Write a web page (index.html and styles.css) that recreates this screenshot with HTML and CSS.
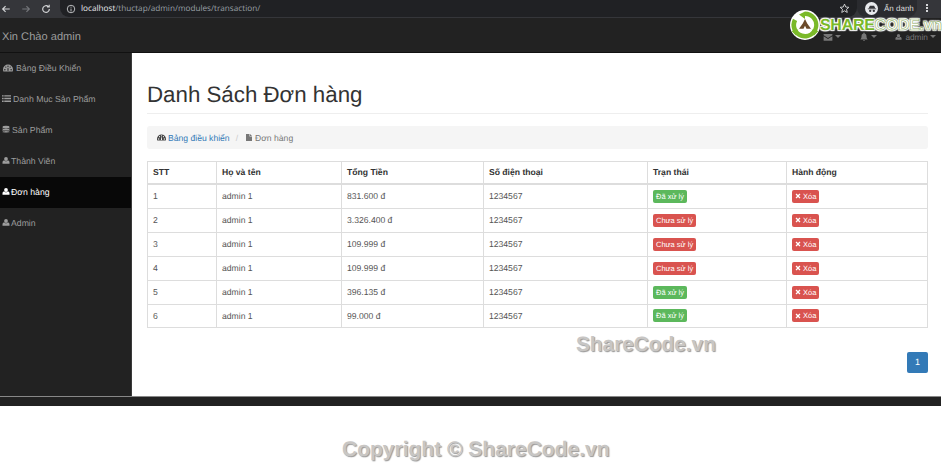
FILE: index.html
```html
<!DOCTYPE html>
<html>
  <head>
    <meta charset="UTF-8" />
    <title>Danh Sách Đơn hàng</title>
    <link rel="stylesheet" href="styles.css">
  </head>
  <body>
    <svg class="icon-defs" width="0" height="0">
      <symbol id="i-gauge" viewBox="0 0 16 16"><path fill-rule="evenodd" d="M8 2.500a8 8 0 0 0-8 8c0 1.200.2 2 .6 3h14.800c.4-1 .6-1.800.6-3a8 8 0 0 0-8-8zM3 11.800a1.200 1.200 0 1 1 0-2.400 1.200 1.200 0 0 1 0 2.400zM4.500 7.600a1.100 1.100 0 1 1 0-2.200 1.100 1.100 0 0 1 0 2.200zM8 6.200a1.100 1.100 0 1 1 0-2.200 1.100 1.100 0 0 1 0 2.200zM11.500 7.600a1.100 1.100 0 1 1 0-2.200 1.100 1.100 0 0 1 0 2.200zM13 11.800a1.200 1.200 0 1 1 0-2.400 1.200 1.200 0 0 1 0 2.400zM7 12.500l.4-5h1.200l.4 5z"/></symbol>
      <symbol id="i-list" viewBox="0 0 16 16"><path d="M0 2h3v2.500H0zm4 0h12v2.500H4zM0 6.700h3v2.500H0zm4 0h12v2.500H4zM0 11.500h3V14H0zm4 0h12V14H4z"/></symbol>
      <symbol id="i-db" viewBox="0 0 16 16"><ellipse cx="8" cy="3.500" rx="7" ry="2.800"/><path d="M1 5.500C3 7.800 13 7.800 15 5.500v2.300c-2 2.300-12 2.300-14 0zm0 3.400c2 2.300 12 2.300 14 0v2.300c-2 2.300-12 2.300-14 0zM1 12.300c2 2.300 12 2.300 14 0V13c-1.500 2.800-12.500 2.800-14 0z"/></symbol>
      <symbol id="i-user" viewBox="0 0 16 16"><circle cx="8" cy="5" r="3.800"/><path d="M1 14.500v-3c0-2 1.500-3.300 3.600-3.300C5.500 9.200 6.700 9.800 8 9.800s2.500-.6 3.400-1.600c2.100 0 3.600 1.300 3.600 3.300v3z"/></symbol>
      <symbol id="i-file" viewBox="0 0 16 16"><path d="M2 1h7v5h5v9H2zM10 1l4 4h-4z"/></symbol>
      <symbol id="i-x" viewBox="0 0 16 16"><path d="M4 1.500l4 4 4-4 2.500 2.500-4 4 4 4-2.500 2.500-4-4-4 4L1.500 12l4-4-4-4z"/></symbol>
      <symbol id="i-mail" viewBox="0 0 16 16"><path d="M1 3h14v2L8 9.500 1 5zm0 3.700L8 11l7-4.300V14H1z"/></symbol>
      <symbol id="i-bell" viewBox="0 0 16 16"><path d="M8 1a1 1 0 0 1 1 1.200c2.300.5 3 2.300 3 4.800 0 2.500 1 3.800 2 5H2c1-1.200 2-2.500 2-5 0-2.500.7-4.300 3-4.800A1 1 0 0 1 8 1zM6.500 13h3a1.500 1.500 0 0 1-3 0z"/></symbol>
    </svg>

    <div class="browser-bar">
      <div class="browser-nav">
        <svg class="nav-btn" viewBox="0 0 12 12"><path d="M10.500 6H2M5.500 2.500L2 6l3.500 3.500"/></svg>
        <svg class="nav-btn nav-off" viewBox="0 0 12 12"><path d="M1.500 6H10M6.500 2.500L10 6 6.500 9.500"/></svg>
        <svg class="nav-btn" viewBox="0 0 12 12"><path d="M10 6a4 4 0 1 1-1.200-2.800M9.800 1v2.600H7.200"/></svg>
      </div>
      <div class="address">
        <svg class="info" viewBox="0 0 12 12"><circle cx="6" cy="6" r="4.500"/><path d="M6 5.500V9M6 3.200v1.200"/></svg>
        <span class="url"><b>localhost</b>/thuctap/admin/modules/transaction/</span>
        <svg class="star" viewBox="0 0 12 12"><path d="M6 1.200l1.400 3.200 3.400.3-2.600 2.200.8 3.400L6 8.500l-3 1.800.8-3.400-2.600-2.200 3.400-.3z"/></svg>
      </div>
      <div class="incognito">
        <span class="spy"><svg viewBox="0 0 12 12"><path d="M2 5h8L8.500 2h-5zM1 5.500h10v.8H1z"/><circle cx="3.800" cy="8.200" r="1.400"/><circle cx="8.200" cy="8.200" r="1.400"/></svg></span>
        <span>Ẩn danh</span>
      </div>
      <div class="kebab"><i></i><i></i><i></i></div>
    </div>

    <div class="page">
      <header class="navbar">
        <a class="brand">Xin Chào admin</a>
        <div class="nav-tools">
          <span class="tool"><svg class="ico"><use href="#i-mail"/></svg><i class="caret"></i></span>
          <span class="tool"><svg class="ico"><use href="#i-bell"/></svg><i class="caret"></i></span>
          <span class="tool"><svg class="ico"><use href="#i-user"/></svg>admin<i class="caret"></i></span>
        </div>
      </header>

      <div class="wrapper">
        <nav class="sidebar">
          <a class="side-link side-gauge"><svg class="ico"><use href="#i-gauge"/></svg>Bảng Điều Khiển</a>
          <a class="side-link"><svg class="ico"><use href="#i-list"/></svg>Danh Mục Sản Phẩm</a>
          <a class="side-link side-db"><svg class="ico"><use href="#i-db"/></svg>Sản Phẩm</a>
          <a class="side-link side-user"><svg class="ico"><use href="#i-user"/></svg>Thành Viên</a>
          <a class="side-link side-user active"><svg class="ico"><use href="#i-user"/></svg>Đơn hàng</a>
          <a class="side-link side-user"><svg class="ico"><use href="#i-user"/></svg>Admin</a>
        </nav>

        <main class="content">
          <h1 class="page-title">Danh Sách Đơn hàng</h1>
          <div class="breadcrumb">
            <svg class="ico crumb-home"><use href="#i-gauge"/></svg><a>Bảng điều khiển</a>
            <span class="sep">/</span>
            <svg class="ico crumb-file"><use href="#i-file"/></svg><span>Đơn hàng</span>
          </div>

          <table class="orders">
            <thead>
              <tr>
                <th class="c-stt">STT</th>
                <th class="c-name">Họ và tên</th>
                <th class="c-total">Tổng Tiền</th>
                <th class="c-phone">Số điện thoại</th>
                <th class="c-state">Trạn thái</th>
                <th>Hành động</th>
              </tr>
            </thead>
            <tbody>
              <tr>
                <td>1</td><td>admin 1</td><td>831.600 đ</td><td>1234567</td>
                <td><span class="btn green">Đã xử lý</span></td>
                <td><span class="btn red"><svg class="ico"><use href="#i-x"/></svg>Xóa</span></td>
              </tr>
              <tr>
                <td>2</td><td>admin 1</td><td>3.326.400 đ</td><td>1234567</td>
                <td><span class="btn red">Chưa sử lý</span></td>
                <td><span class="btn red"><svg class="ico"><use href="#i-x"/></svg>Xóa</span></td>
              </tr>
              <tr>
                <td>3</td><td>admin 1</td><td>109.999 đ</td><td>1234567</td>
                <td><span class="btn red">Chưa sử lý</span></td>
                <td><span class="btn red"><svg class="ico"><use href="#i-x"/></svg>Xóa</span></td>
              </tr>
              <tr>
                <td>4</td><td>admin 1</td><td>109.999 đ</td><td>1234567</td>
                <td><span class="btn red">Chưa sử lý</span></td>
                <td><span class="btn red"><svg class="ico"><use href="#i-x"/></svg>Xóa</span></td>
              </tr>
              <tr>
                <td>5</td><td>admin 1</td><td>396.135 đ</td><td>1234567</td>
                <td><span class="btn green">Đã xử lý</span></td>
                <td><span class="btn red"><svg class="ico"><use href="#i-x"/></svg>Xóa</span></td>
              </tr>
              <tr>
                <td>6</td><td>admin 1</td><td>99.000 đ</td><td>1234567</td>
                <td><span class="btn green">Đã xử lý</span></td>
                <td><span class="btn red"><svg class="ico"><use href="#i-x"/></svg>Xóa</span></td>
              </tr>
            </tbody>
          </table>

          <div class="pager"><a class="page-num">1</a></div>
        </main>
      </div>
      <div class="bottom-bar"></div>
    </div>

    <!-- watermarks on top of the shot -->
    <div class="logo">
      <svg class="logo-mark" viewBox="0 0 40 40">
        <circle cx="20" cy="20" r="20" fill="#fff"/>
        <path d="M20 2a18 18 0 1 1-16 9.500l5.500 3a12 12 0 1 0 10.500-6.500z" fill="#7ab929"/>
        <path d="M20 2l-8 4 8 6zM2 28l9-2-3 8zM38 28l-9-2 3 8z" fill="#7ab929"/>
        <path d="M20 12l3 6 5 7h-6l-2-4-2 4h-6l5-7z" fill="#6b4a2a"/>
      </svg>
      <span class="logo-text"><b>SHARE</b><span class="logo-code">CODE.vn</span></span>
    </div>
    <div class="mark mark-mid">ShareCode.vn</div>
    <div class="mark mark-foot">Copyright © ShareCode.vn</div>
  </body>
</html>
```

FILE: styles.css
```css
/* screenshot of an admin page inside a browser */
body {
  margin: 0;
  width: 950px;
  height: 472px;
  overflow: hidden;
  background-color: #fff;
  font-family: "Liberation Sans", Arial, sans-serif;
  font-size: 9px;
  color: #444;
  text-rendering: geometricPrecision;
}
.icon-defs {
  display: block;
  height: 0;
}
.ico {
  width: 9px;
  height: 9px;
  fill: currentColor;
  flex: none;
}

/* browser chrome */
.browser-bar {
  display: flex;
  align-items: flex-start;
  width: 941px;
  height: 18px;
  background-color: #35363a;
  color: #ddd;
}
.browser-nav {
  display: flex;
  align-items: center;
  gap: 10px;
  height: 17px;
  padding-left: 1px;
  width: 60px;
  box-sizing: border-box;
}
.nav-btn {
  width: 10px;
  height: 10px;
  fill: none;
  stroke: #d5d6d8;
  stroke-width: 1.400;
}
.nav-off {
  stroke: #74767a;
}
.address {
  display: flex;
  align-items: center;
  width: 797px;
  height: 17px;
  padding-left: 6px;
  box-sizing: border-box;
  background-color: #202124;
  border-radius: 0 0 9px 9px;
  color: #9aa0a6;
}
.address b {
  font-weight: normal;
  color: #e8eaed;
}
.info {
  width: 10px;
  height: 10px;
  margin-right: 5px;
  fill: none;
  stroke: #d5d6d8;
}
.url {
  flex: 1;
  font-family: "Open Sans", sans-serif;
  font-size: 8.200px;
}
.star {
  width: 11px;
  height: 11px;
  margin-right: 7px;
  fill: none;
  stroke: #d5d6d8;
}
.incognito {
  display: flex;
  align-items: center;
  gap: 6px;
  height: 17px;
  width: 60px;
  padding-left: 8px;
  box-sizing: border-box;
  background-color: #2a2b2f;
  border-radius: 0 0 9px 9px;
  font-size: 8px;
  color: #dcdcdc;
}
.spy {
  display: flex;
  align-items: center;
  justify-content: center;
  width: 13px;
  height: 13px;
  border-radius: 50%;
  background-color: #e8eaed;
}
.spy svg {
  width: 10px;
  height: 10px;
  fill: #35363a;
}
.kebab {
  display: flex;
  flex-direction: column;
  gap: 1px;
  margin-left: 9px;
  padding-top: 4px;
}
.kebab i {
  width: 2px;
  height: 2px;
  background-color: #d5d6d8;
}

/* app */
.page {
  width: 941px;
  height: 388px;
  background-color: #222;
}
.navbar {
  display: flex;
  align-items: center;
  justify-content: space-between;
  height: 35px;
  padding-top: 3px;
  box-sizing: border-box;
  border-bottom: 1px solid #111;
  background-color: #222;
}
.brand {
  padding-left: 2px;
  font-size: 11.100px;
  color: #9d9d9d;
}
.nav-tools {
  display: flex;
  gap: 18px;
  padding-right: 5px;
  color: #777;
}
.tool {
  display: flex;
  align-items: center;
  gap: 1px;
  font-size: 8.300px;
}
.tool .ico {
  width: 10px;
  height: 10px;
}
.tool:last-child .ico {
  width: 7px;
  height: 8px;
  margin-right: 2px;
}
.caret {
  width: 0;
  height: 0;
  margin-left: 1px;
  border-top: 3px solid currentColor;
  border-left: 3px solid transparent;
  border-right: 3px solid transparent;
}
.wrapper {
  display: flex;
  height: 343px;
}
.sidebar {
  width: 132px;
  flex: none;
  border-right: 1px solid #3a3a3a;
  box-sizing: border-box;
  font-size: 8.700px;
}
.side-link {
  display: flex;
  align-items: center;
  gap: 2px;
  height: 31px;
  padding-left: 2px;
  padding-bottom: 2px;
  box-sizing: border-box;
  color: #9d9d9d;
}
.side-gauge {
  padding-left: 3px;
  gap: 3px;
}
.side-gauge .ico {
  width: 10px;
  height: 10px;
}
.side-db .ico {
  width: 8px;
}
.side-user {
  gap: 1px;
}
.side-user .ico {
  width: 8px;
}
.side-link.active {
  background-color: #080808;
  color: #fff;
}
.content {
  flex: 1;
  padding: 0 13px 0 15px;
  background-color: #fff;
}
.page-title {
  margin: 29px 0 12px;
  padding-bottom: 5px;
  border-bottom: 1px solid #eee;
  font-size: 22.300px;
  font-weight: normal;
  line-height: 26px;
  color: #333;
}
.breadcrumb {
  display: flex;
  align-items: center;
  gap: 2px;
  height: 23px;
  padding-left: 10px;
  border-radius: 3px;
  background-color: #f5f5f5;
  font-size: 8.600px;
  color: #777;
}
.breadcrumb a {
  color: #337ab7;
}
.crumb-home {
  color: #444;
}
.crumb-file {
  width: 8px;
}
.sep {
  margin: 0 5px 0 4px;
  color: #ccc;
}
.orders {
  width: 781px;
  margin-top: 12px;
  table-layout: fixed;
  border-collapse: collapse;
  font-size: 8.600px;
}
.orders th,
.orders td {
  padding: 0 5px 1px;
  border: 1px solid #ddd;
  text-align: left;
  vertical-align: middle;
}
.orders th {
  height: 20px;
  border-bottom-width: 2px;
  color: #333;
}
.orders td {
  height: 22px;
  color: #555;
}
.orders tbody tr:last-child td {
  height: 21px;
}
.c-stt {
  width: 58px;
}
.c-name {
  width: 114px;
}
.c-total {
  width: 131px;
}
.c-phone {
  width: 153px;
}
.c-state {
  width: 128px;
}
.btn {
  display: inline-flex;
  align-items: center;
  gap: 2px;
  height: 13px;
  padding: 0 3px;
  border-radius: 2px;
  font-size: 7.500px;
  color: #fff;
}
.btn .ico {
  width: 6px;
  height: 6px;
}
.green {
  background-color: #5cb85c;
}
.red {
  background-color: #d9534f;
}
.pager {
  display: flex;
  justify-content: flex-end;
  margin-top: 24px;
}
.page-num {
  display: block;
  width: 21px;
  height: 21px;
  border-radius: 2px;
  background-color: #337ab7;
  color: #fff;
  font-size: 9px;
  line-height: 21px;
  text-align: center;
}
.bottom-bar {
  height: 10px;
  border-top: 1px solid #888;
  box-sizing: border-box;
  background-color: #222;
}

/* watermarks */
.logo {
  position: absolute;
  top: 10px;
  left: 790px;
  display: flex;
  align-items: center;
}
.logo-mark {
  width: 30px;
  height: 30px;
}
.logo-text {
  font-size: 16px;
  line-height: 13px;
  font-weight: bold;
  letter-spacing: -0.300px;
  white-space: nowrap;
  text-shadow: 0 0 2px #fff, 0 0 2px #fff, 1px 1px 1px #fff, -1px -1px 1px #fff, 1px -1px 1px #fff, -1px 1px 1px #fff;
}
.logo-text b {
  color: #7ab929;
}
.logo-code {
  color: #fff;
  -webkit-text-stroke: 0.600px #8cab64;
}
.mark {
  position: absolute;
  font-size: 20.800px;
  font-weight: bold;
  color: #c8c6c4;
  text-shadow: 1px 1px 1px #999;
}
.mark-mid {
  top: 333px;
  left: 576px;
}
.mark-foot {
  top: 438px;
  left: 342px;
  font-size: 21px;
}
```
